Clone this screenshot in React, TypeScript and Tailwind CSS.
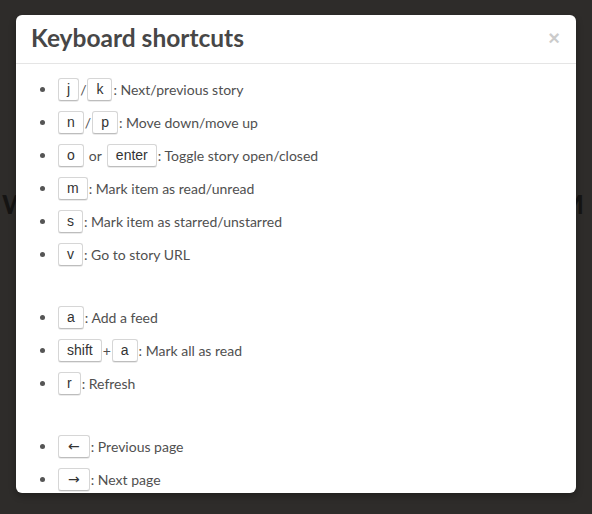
import React from "react";

const Kbd = ({ children, arrow }: { children: React.ReactNode; arrow?: boolean }) => (
  <kbd
    className="inline-block mx-[1px] px-[8px] h-[23px] leading-[21px] border border-[#d6d6d6] border-b-[#bdbdbd] rounded-[3px] bg-white text-[#333] text-[14px] align-middle shadow-[0_1px_0_rgba(0,0,0,0.08)]"
    style={{
      fontFamily: arrow
        ? '"DejaVu Sans", "Liberation Sans", sans-serif'
        : '"Liberation Sans", Arial, sans-serif',
      paddingLeft: arrow ? 9 : undefined,
      paddingRight: arrow ? 9 : undefined,
    }}
  >
    {children}
  </kbd>
);

const Item = ({ children }: { children: React.ReactNode }) => (
  <li className="flex items-center h-[33px]">
    <span className="ml-[9px] w-[5px] h-[5px] rounded-full bg-[#555] shrink-0" />
    <span className="ml-[12px] flex items-center whitespace-nowrap">{children}</span>
  </li>
);

export default function App() {
  return (
    <div
      className="relative w-[592px] h-[514px] bg-[#2e2c2a] overflow-hidden"
      style={{ fontFamily: 'Lato, "Open Sans", sans-serif' }}
    >
      <div className="flex justify-between pt-[191px] pl-[2px] pr-[8px] text-[27px] leading-[26px] font-bold text-[#151413]">
        <span>W</span>
        <span>M</span>
      </div>

      <div className="absolute left-[16px] top-[15px] w-[560px] h-[478px] bg-white rounded-[6px] shadow-[0_3px_7px_rgba(0,0,0,0.3)] overflow-hidden flex flex-col">
        <div className="flex items-center justify-between pl-[15px] pr-[16px] pt-[8px] pb-[10px] border-b border-[#e5e5e5]">
          <h3 className="text-[24.5px] leading-[30px] font-bold text-[#474747]">Keyboard shortcuts</h3>
          <span
            className="text-[20px] leading-[20px] font-bold text-black opacity-20"
            style={{ fontFamily: '"Liberation Sans", Arial, sans-serif' }}
          >
            ×
          </span>
        </div>
        <div className="pt-[9px] pl-[15px] text-[14px] text-[#505050] overflow-hidden">
          <ul>
            <Item>
              <Kbd>j</Kbd>/<Kbd>k</Kbd>
              <span>: Next/previous story</span>
            </Item>
            <Item>
              <Kbd>n</Kbd>/<Kbd>p</Kbd>
              <span>: Move down/move up</span>
            </Item>
            <Item>
              <Kbd>o</Kbd>
              <span className="mx-[4px]">or</span>
              <Kbd>enter</Kbd>
              <span>: Toggle story open/closed</span>
            </Item>
            <Item>
              <Kbd>m</Kbd>
              <span>: Mark item as read/unread</span>
            </Item>
            <Item>
              <Kbd>s</Kbd>
              <span>: Mark item as starred/unstarred</span>
            </Item>
            <Item>
              <Kbd>v</Kbd>
              <span>: Go to story URL</span>
            </Item>
          </ul>
          <ul className="mt-[30px]">
            <Item>
              <Kbd>a</Kbd>
              <span>: Add a feed</span>
            </Item>
            <Item>
              <Kbd>shift</Kbd>+<Kbd>a</Kbd>
              <span>: Mark all as read</span>
            </Item>
            <Item>
              <Kbd>r</Kbd>
              <span>: Refresh</span>
            </Item>
          </ul>
          <ul className="mt-[30px]">
            <Item>
              <Kbd arrow>←</Kbd>
              <span>: Previous page</span>
            </Item>
            <Item>
              <Kbd arrow>→</Kbd>
              <span>: Next page</span>
            </Item>
          </ul>
        </div>
      </div>
    </div>
  );
}
